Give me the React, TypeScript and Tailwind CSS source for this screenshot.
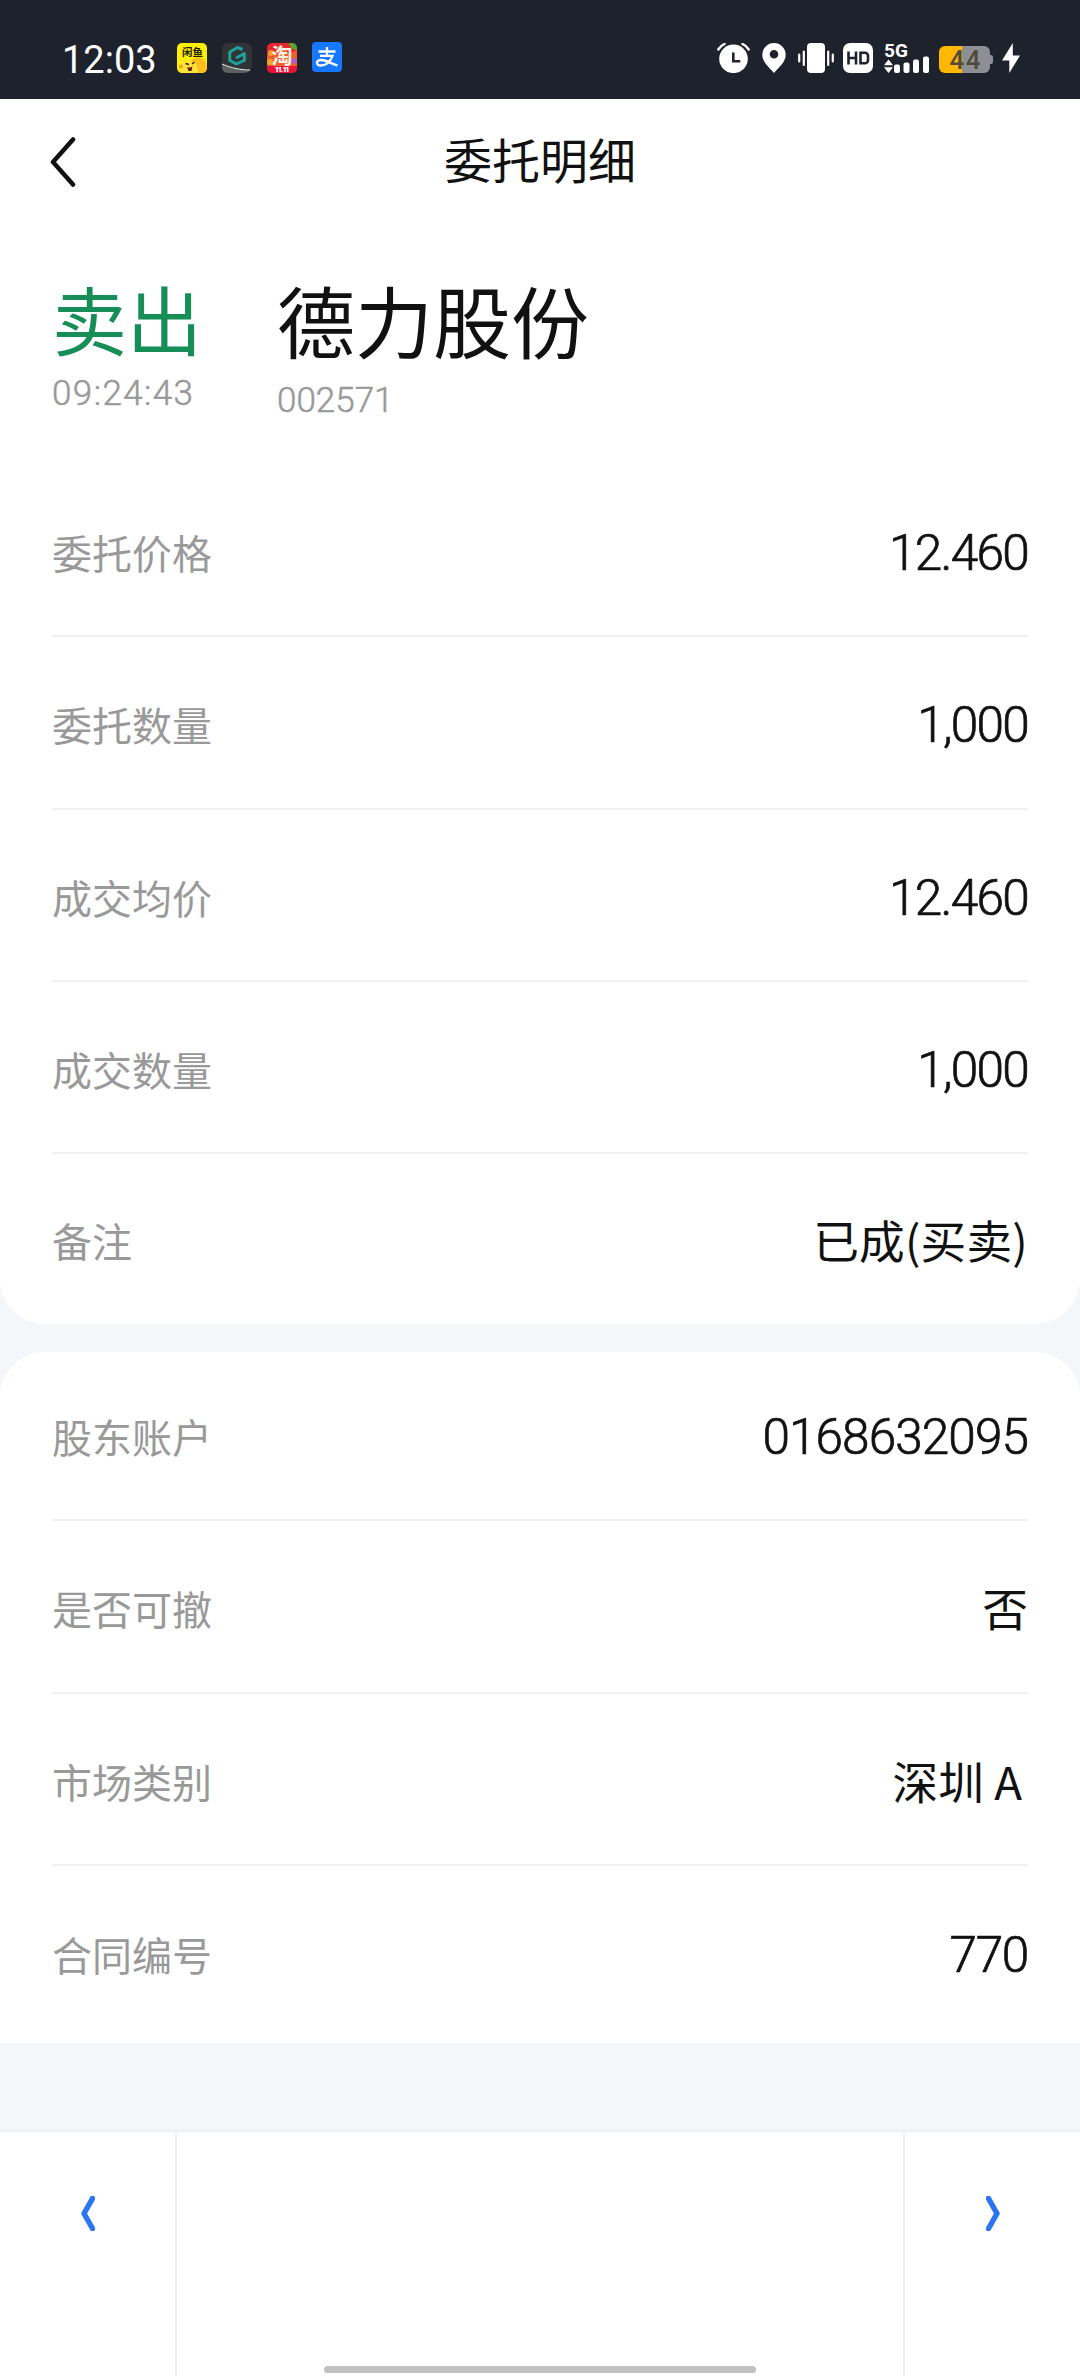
import { clsx } from "clsx"

type Item = { label: string; value: string; numeric?: boolean; className?: string }

const orderItems: Item[] = [
  { label: "委托价格", value: "12.460", numeric: true, className: "tracking-[-1.7px]" },
  { label: "委托数量", value: "1,000", numeric: true, className: "tracking-[-1.7px]" },
  { label: "成交均价", value: "12.460", numeric: true, className: "tracking-[-1.7px]" },
  { label: "成交数量", value: "1,000", numeric: true, className: "tracking-[-1.7px]" },
  { label: "备注", value: "已成(买卖)", className: "tracking-[0.2px]" },
]

const accountItems: Item[] = [
  { label: "股东账户", value: "0168632095", numeric: true, className: "tracking-[-0.9px]" },
  { label: "是否可撤", value: "否" },
  { label: "市场类别", value: "深圳 A", className: "mr-[6px]" },
  { label: "合同编号", value: "770", numeric: true, className: "tracking-[-1.3px]" },
]

function AppIcons() {
  return (
    <div className="flex gap-[15px]">
      <svg width="30" height="30" viewBox="0 0 30 30" className="overflow-visible">
        <rect width="30" height="30" rx="5" fill="#fdf000" />
        <path d="M11 30c-3-5 0-12 5-14 6-3 11-1 13 4 1 3 1 6 0 8-1 1-2 2-4 2z" fill="#ffbf1f" />
        <path d="M2 27c0-6 4-9 8-10 7 0 11 5 11 13H5c-2 0-3-1-3-3z" fill="#ffe23a" />
        <circle cx="4" cy="23.500" r="2" fill="#f5a51c" />
        <text x="15.500" y="13" textAnchor="middle" fontSize="10.500" fontWeight="700" fill="#1c1a00" fontFamily="Noto Sans CJK SC, sans-serif">闲鱼</text>
        <path d="M8.500 20.500l3.500 1M15 21l2.500-2" stroke="#221" strokeWidth="1.400" />
        <path d="M10 24c2 1 4 .5 5.500-.5L14.500 28h-3z" fill="#6b1a0c" />
      </svg>
      <svg width="30" height="30" viewBox="0 0 30 30">
        <rect width="30" height="30" rx="6" fill="#303436" />
        <path d="M0 21c9 4 19 6 28 6-2 2-4 3-7 3H6c-4 0-6-3-6-6z" fill="#5d6061" />
        <path d="M0 21c9 4 19 6 28 6" fill="none" stroke="#e8e8e8" strokeWidth="1" />
        <path d="M20.500 6.500L15.500 4.500 7.800 9v8.500l6.500 3.500 8-3.500V10.500L14 15" fill="none" stroke="#1fa09a" strokeWidth="3" strokeLinejoin="round" />
      </svg>
      <svg width="30" height="30" viewBox="0 0 30 30" className="overflow-visible">
        <rect width="30" height="30" rx="5" fill="#e8252f" />
        <path d="M0 12l6-5 4 5 5-9 7 8 8-4v16H0z" fill="#f0602c" />
        <path d="M22 0h3a5 5 0 0 1 5 5v2c-4 0-7-3-8-7z" fill="#4fae2d" />
        <circle cx="4" cy="10" r="3" fill="#ff9d2e" />
        <circle cx="27" cy="18" r="3" fill="#b45cc0" />
        <circle cx="3" cy="19" r="3" fill="#f2a52c" />
        <text x="15" y="20" textAnchor="middle" fontSize="21" fontWeight="700" fill="#fff4e8" fontFamily="Noto Sans CJK SC, sans-serif">淘</text>
        <path d="M0 23h30v2a5 5 0 0 1-5 5H5a5 5 0 0 1-5-5z" fill="#e9123a" />
        <text x="15" y="29" textAnchor="middle" fontSize="6.500" fontWeight="900" fill="#fff" fontFamily="Inter, sans-serif">11.11</text>
      </svg>
      <svg width="30" height="30" viewBox="0 0 30 30" className="-mt-px">
        <rect width="30" height="30" rx="4" fill="#1677ff" />
        <path d="M6.500 9.500h17M15 5v8.500M8 13.800h12.500c-1.500 4-5 9.700-12 9.700-3.500 0-4.700-3.500-2-5 4-2 9 1.500 19 5" fill="none" stroke="#fff" strokeWidth="2.300" />
      </svg>
    </div>
  )
}

function StatusIcons() {
  return (
    <div className="flex items-start">
      <svg width="33" height="30" viewBox="0 0 33 30" className="mr-3">
        <circle cx="16.500" cy="15.800" r="14.300" fill="#fff" />
        <path d="M1.300 6.500C3 3.800 5 2 7.500 1M31.700 6.500C30 3.800 28 2 25.500 1" fill="none" stroke="#fff" strokeWidth="2.400" strokeLinecap="round" />
        <path d="M16.300 9.500v8.700h7" fill="none" stroke="#1e222d" strokeWidth="2.600" />
      </svg>
      <svg width="24" height="30" viewBox="0 0 24 30" className="mr-3">
        <path d="M12 0a11.700 11.700 0 0 0-11.700 11.700C.3 19 7 24 12 30c5-6 11.700-11 11.700-18.300A11.700 11.700 0 0 0 12 0zm0 7a4.300 4.300 0 1 1 0 8.600A4.300 4.300 0 0 1 12 7z" fill="#fff" />
      </svg>
      <svg width="36" height="30" viewBox="0 0 36 30" className="mr-[9px]">
        <rect x="9" width="18" height="30" rx="4" fill="#fff" />
        <path d="M1.200 11.500v7M5.800 8.500v13.500M30.200 8.500v13.500M34.800 11.500v7" stroke="#fff" strokeWidth="2.200" strokeLinecap="round" />
      </svg>
      <svg width="30" height="30" viewBox="0 0 30 30" className="mr-[10px]">
        <rect width="30" height="30" rx="7" fill="#fff" />
        <path d="M5.500 8.500v13M13 8.500v13M5.500 15H13M17.500 9.800h4.500a3 3 0 0 1 3 3v4.400a3 3 0 0 1-3 3h-4.500z" fill="none" stroke="#1e222d" strokeWidth="2.600" />
      </svg>
      <svg width="46" height="30" viewBox="0 0 46 30" className="mr-[10px] overflow-visible">
        <text x="1" y="14" fontSize="19" fontWeight="700" fill="#fff" fontFamily="Roboto, sans-serif" textLength="24">5G</text>
        <path d="M5.500 16.500l4.500 5.800H1zM5.500 30l4.500-5.800H1z" fill="#fff" />
        <rect x="11" y="21.500" width="6" height="8.500" rx="2" fill="#fff" />
        <rect x="20.500" y="19.500" width="6" height="10.500" rx="2" fill="#fff" />
        <rect x="30" y="16.500" width="6" height="13.500" rx="2" fill="#fff" />
        <rect x="40" y="13.500" width="6" height="16.500" rx="2" fill="#fff" />
      </svg>
      <svg width="54" height="30" viewBox="0 0 54 30" className="mr-[9px] overflow-visible">
        <path d="M23 3h22a6 6 0 0 1 6 6v15a6 6 0 0 1-6 6H23z" fill="#8e8f95" />
        <path d="M23 3H6a6 6 0 0 0-6 6v15a6 6 0 0 0 6 6h17z" fill="#ffb700" />
        <path d="M51 12h1a2 2 0 0 1 2 2v5a2 2 0 0 1-2 2h-1z" fill="#8e8f95" />
        <text x="26" y="26" textAnchor="middle" fontSize="26" fontWeight="500" fill="#4f4a3a" fontFamily="Roboto, sans-serif" textLength="31">44</text>
      </svg>
      <svg width="18" height="30" viewBox="0 0 18 30">
        <path d="M10.800 0L0 17.500h7.300v12.500L18 12.500h-7.200z" fill="#fff" />
      </svg>
    </div>
  )
}

function StatusBar() {
  return (
    <div className="flex h-[99px] items-start justify-between bg-[#1e222d] pr-[60px] pl-[62px]">
      <div className="flex">
        <span className="mt-[38px] w-[115px] font-[Roboto,sans-serif] text-[38px] leading-[44px] text-white">12:03</span>
        <div className="mt-[43px]">
          <AppIcons />
        </div>
      </div>
      <div className="mt-[43px]">
        <StatusIcons />
      </div>
    </div>
  )
}

function Row({ label, value, numeric, className }: Item) {
  return (
    <div className="flex h-[172.33px] items-center justify-between border-b-2 border-[#f0f0f0] pt-1 last:border-b-0">
      <span className="text-[40px] leading-[60px] text-[#999]">{label}</span>
      <span
        className={clsx(
          "text-[#111]",
          numeric
            ? "pt-0.5 font-[Roboto,sans-serif] text-[49.5px] leading-[58px] font-light [-webkit-text-stroke:0.7px_#111]"
            : "pb-0.5 text-[45.7px] leading-[56px]",
          className,
        )}
      >
        {value}
      </span>
    </div>
  )
}

export default function App() {
  return (
    <div className="flex h-[2376px] w-[1080px] flex-col overflow-hidden bg-[#f3f7fa] font-['Noto_Sans_CJK_SC',sans-serif]">
      <StatusBar />

      <main className="h-[1225px] rounded-b-[45px] bg-white">
        <header className="grid h-[126px] grid-cols-[1fr_auto_1fr] items-center">
          <svg width="26" height="52" viewBox="0 0 26 52" className="ml-[50px]">
            <path d="M23 3.500L3 26l20 22.500" fill="none" stroke="#111" strokeWidth="4.500" strokeLinecap="round" strokeLinejoin="round" />
          </svg>
          <h1 className="pb-2 text-[48px] leading-[60px] text-[#111]">委托明细</h1>
        </header>

        <section className="flex h-[240px] gap-[72px] px-[52px] pt-11 whitespace-nowrap">
          <div className="w-[153px]">
            <div className="text-[75px] leading-[98px] text-[#178e58]">卖出</div>
            <div className="font-[Roboto,sans-serif] text-[35px] leading-[54px] font-light tracking-[1.4px] text-[#999] [-webkit-text-stroke:0.5px_#999]">09:24:43</div>
          </div>
          <div>
            <div className="text-[78px] leading-[100px] text-[#111]">德力股份</div>
            <div className="pt-[7px] font-[Roboto,sans-serif] text-[35px] leading-[50px] font-light text-[#999] [-webkit-text-stroke:0.5px_#999]">002571</div>
          </div>
        </section>

        {/* the remark row is slightly shorter than the others */}
        <div className="px-[52px] [&>*:last-child]:h-[168px]">
          {orderItems.map((item) => (
            <Row key={item.label} {...item} />
          ))}
        </div>
      </main>

      <section className="mt-7 h-[691px] rounded-t-[45px] bg-white px-[52px]">
        <div className="-mt-[3px]">
          {accountItems.map((item) => (
            <Row key={item.label} {...item} />
          ))}
        </div>
      </section>

      <footer className="mt-[87px] grid flex-1 grid-cols-[177px_1fr_177px] border-t-2 border-[#f0f0f0] bg-white">
        <button className="flex justify-center border-r-2 border-[#f0f0f0] pt-16">
          <svg width="14" height="35" viewBox="0 0 14 35">
            <path d="M11.500 2.500L3 17.500l8.500 15" fill="none" stroke="#2b76f0" strokeWidth="5.500" strokeLinecap="round" strokeLinejoin="round" />
          </svg>
        </button>
        <div className="flex items-end justify-center pb-[3px]">
          <div className="h-[7px] w-[432px] rounded-full bg-[#c1c1c1]" />
        </div>
        <button className="flex justify-center border-l-2 border-[#f0f0f0] pt-16">
          <svg width="14" height="35" viewBox="0 0 14 35">
            <path d="M2.500 2.500l8.500 15-8.500 15" fill="none" stroke="#2b76f0" strokeWidth="5.500" strokeLinecap="round" strokeLinejoin="round" />
          </svg>
        </button>
      </footer>
    </div>
  )
}
